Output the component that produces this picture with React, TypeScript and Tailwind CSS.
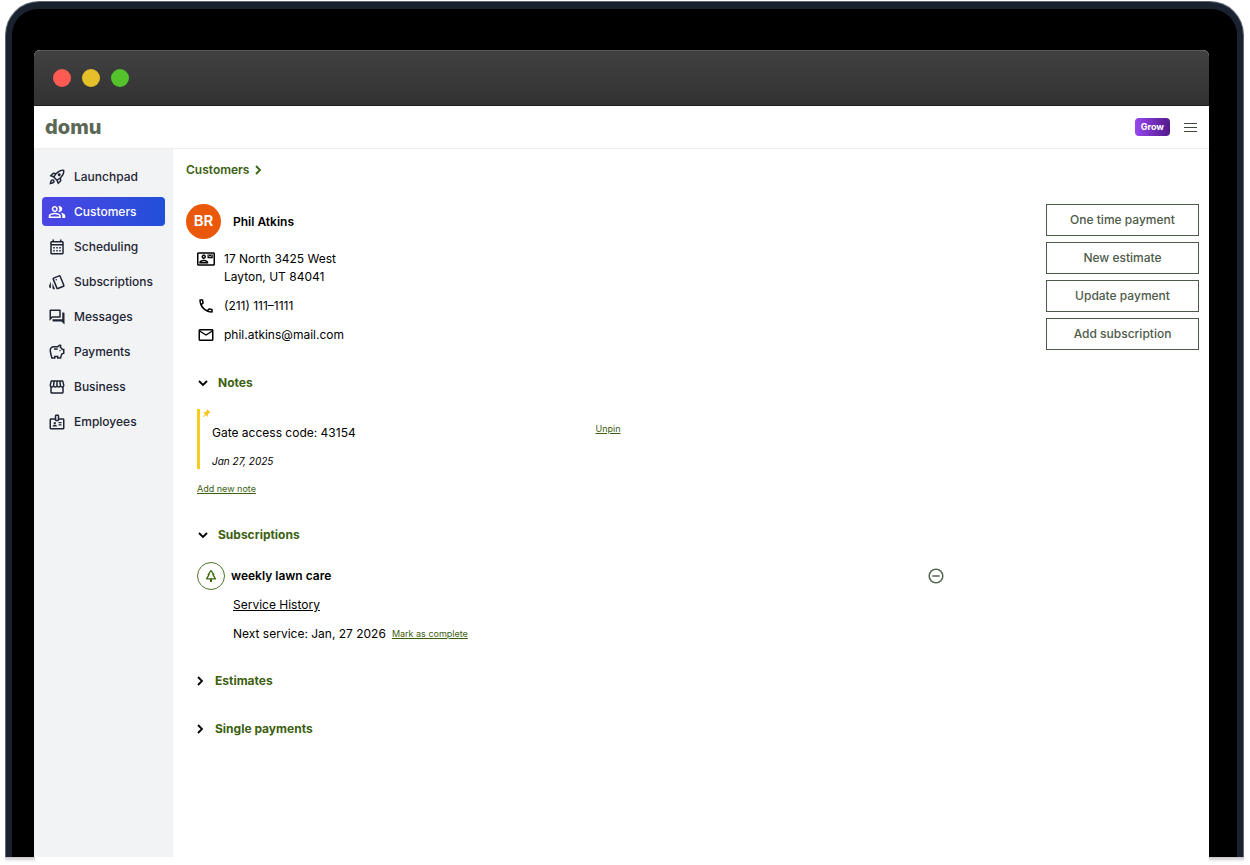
import type { ReactNode } from "react";
import type { IconType } from "react-icons";
import {
  MdOutlineRocketLaunch,
  MdOutlinePeopleAlt,
  MdOutlineCalendarMonth,
  MdOutlineStyle,
  MdOutlineQuestionAnswer,
  MdOutlineSavings,
  MdOutlineStorefront,
  MdOutlineBadge,
  MdOutlineContactMail,
  MdOutlinePhone,
  MdOutlineMail,
  MdPushPin,
  MdRemoveCircleOutline,
} from "react-icons/md";

const navItems: { label: string; icon: IconType; active?: boolean }[] = [
  { label: "Launchpad", icon: MdOutlineRocketLaunch },
  { label: "Customers", icon: MdOutlinePeopleAlt, active: true },
  { label: "Scheduling", icon: MdOutlineCalendarMonth },
  { label: "Subscriptions", icon: MdOutlineStyle },
  { label: "Messages", icon: MdOutlineQuestionAnswer },
  { label: "Payments", icon: MdOutlineSavings },
  { label: "Business", icon: MdOutlineStorefront },
  { label: "Employees", icon: MdOutlineBadge },
];

const actions = ["One time payment", "New estimate", "Update payment", "Add subscription"];

function Chevron({ open = false }: { open?: boolean }) {
  return (
    <svg viewBox="0 0 12 12" className="size-3 shrink-0" fill="none" stroke="currentColor" strokeWidth="1.8" aria-hidden="true">
      <path d={open ? "M2 4l4 4 4-4" : "M4 2l4 4-4 4"} />
    </svg>
  );
}

function TreeIcon() {
  return (
    <svg viewBox="0 0 14 14" className="size-3.5" fill="none" stroke="currentColor" strokeWidth="1.3" strokeLinejoin="round" aria-hidden="true">
      <path d="M7 1.5L4.200 5.600h.9L2.500 9.800h9L8.900 5.600h.9L7 1.500z" />
      <path d="M7 9.800v3.200" strokeWidth="2" />
    </svg>
  );
}

function SectionHeading({ open, children }: { open?: boolean; children: ReactNode }) {
  return (
    <h2 className="leading-5 font-bold text-[#3b6010]">
      <button type="button" aria-expanded={!!open} className={open ? "flex items-center gap-[9px]" : "flex items-center gap-[9px] -ml-[3px]"}>
        <span className="flex text-black">
          <Chevron open={open} />
        </span>
        {children}
      </button>
    </h2>
  );
}

function Sidebar() {
  return (
    <nav aria-label="Main" className="w-[139px] shrink-0 border-r border-[#eceef0] bg-[#f1f3f5] pt-[13px] pr-[7px] pl-2">
      <ul className="flex flex-col gap-1.5">
        {navItems.map(({ label, icon: Icon, active }) => (
          <li key={label}>
            <a
              href="#"
              aria-current={active ? "page" : undefined}
              className={
                active
                  ? "flex h-[29px] items-center gap-2 rounded bg-linear-to-r from-[#4b45e4] to-[#1f4fd9] pl-1.5 font-medium text-white"
                  : "flex h-[29px] items-center gap-2 rounded pl-1.5 font-medium text-[#1e2433]"
              }
            >
              <Icon className="size-[18px] shrink-0" />
              {label}
            </a>
          </li>
        ))}
      </ul>
    </nav>
  );
}

function Details() {
  return (
    <div className="min-w-0 flex-1">
      <div className="flex items-center gap-3">
        <span className="flex size-[35px] items-center justify-center rounded-full bg-[#ea580c] text-[15px] font-semibold text-white">BR</span>
        <h1 className="font-semibold">Phil Atkins</h1>
      </div>
      <div className="mt-[11px] flex flex-col gap-[11px] pl-[11px] leading-[18px]">
        <div className="flex gap-[9px]">
          <MdOutlineContactMail className="size-[18px] shrink-0" />
          <address className="not-italic">
            17 North 3425 West
            <br />
            Layton, UT 84041
          </address>
        </div>
        <div className="flex items-center gap-[9px]">
          <MdOutlinePhone className="size-[18px]" />
          (211) 111–1111
        </div>
        <div className="flex items-center gap-[9px]">
          <MdOutlineMail className="size-[18px]" />
          phil.atkins@mail.com
        </div>
      </div>

      <section className="mt-[29px] pl-[11px]">
        <SectionHeading open>Notes</SectionHeading>
        <div className="mt-4 grid grid-cols-2">
          <div className="relative border-l-3 border-[#f5cd1e] pt-[15px] pl-3 leading-[18px]">
            <MdPushPin className="absolute top-0 left-px size-[10px] rotate-45 text-[#f5c51e]" />
            <p>Gate access code: 43154</p>
            <p className="mt-[11px] text-[10px] leading-4 italic">Jan 27, 2025</p>
          </div>
          <div className="pt-3">
            <button type="button" className="block text-[9px] leading-4 text-[#3b6010] underline">Unpin</button>
          </div>
        </div>
        <button type="button" className="mt-3 block text-[9px] leading-4 text-[#3b6010] underline">Add new note</button>
      </section>

      <section className="mt-7 pl-[11px]">
        <SectionHeading open>Subscriptions</SectionHeading>
        <div className="mt-[17px] flex items-center gap-1.5 pr-[49px]">
          <span className="flex size-7 items-center justify-center rounded-full border border-[#4f7327] text-[#3b6b10]">
            <TreeIcon />
          </span>
          <h3 className="font-semibold">weekly lawn care</h3>
          <button type="button" aria-label="Remove subscription" className="ml-auto text-[#566553]">
            <MdRemoveCircleOutline className="size-[18px]" />
          </button>
        </div>
        <div className="pl-9 leading-[18px]">
          <a href="#" className="mt-1.5 block w-fit underline">Service History</a>
          <p className="mt-[11px] flex items-center gap-1.5">
            Next service: Jan, 27 2026
            <button type="button" className="text-[9px] leading-4 text-[#3b6010] underline">Mark as complete</button>
          </p>
        </div>
      </section>

      <section className="mt-7 pl-[11px]">
        <SectionHeading>Estimates</SectionHeading>
      </section>
      <section className="mt-7 pl-[11px]">
        <SectionHeading>Single payments</SectionHeading>
      </section>
    </div>
  );
}

export default function App() {
  return (
    <div className="flex min-h-screen flex-col bg-white pt-px pr-1.5 pb-[3px] pl-[5px] font-['Inter',sans-serif] text-[12px]">
      <div className="flex flex-1 flex-col rounded-t-[34px] bg-[#5f6876] px-px pt-px">
        <div className="flex flex-1 flex-col rounded-t-[33px] bg-[#1a2230] px-1.5 pt-[7px]">
          <div className="flex flex-1 flex-col rounded-t-[26px] bg-black pt-[41px] pr-7 pl-[22px]">
            <div className="flex flex-1 flex-col overflow-hidden rounded-t-md bg-white text-black">
              <div className="flex h-14 items-center gap-[11px] border-t border-b border-t-[#5a5a5a] border-b-[#1c1c1c] bg-linear-to-b from-[#414141] to-[#323232] pl-[19px]">
                <span className="size-[18px] rounded-full bg-[#ff5b52]" />
                <span className="size-[18px] rounded-full bg-[#e6c029]" />
                <span className="size-[18px] rounded-full bg-[#53c22b]" />
              </div>
              <header className="flex h-[43px] items-center justify-between border-b border-[#eceef0] pr-3 pl-[11px]">
                <a href="#" className="text-[20px] leading-none font-extrabold text-[#5c6856]">domu</a>
                <div className="flex items-center gap-3.5">
                  <span className="flex h-[18px] items-center rounded bg-linear-to-r from-[#9747ef] to-[#531a8c] px-1.5 text-[9px] font-bold text-white">Grow</span>
                  <button type="button" aria-label="Menu" className="flex w-[13px] flex-col gap-[3px]">
                    <span className="h-px bg-[#3f4a3b]" />
                    <span className="h-px bg-[#3f4a3b]" />
                    <span className="h-px bg-[#3f4a3b]" />
                  </button>
                </div>
              </header>
              <div className="flex flex-1">
                <Sidebar />
                <main className="min-w-0 flex-1 pt-[11px] pr-2.5 pl-[13px]">
                  <nav aria-label="Breadcrumb">
                    <a href="#" className="flex w-fit items-center gap-[3px] leading-5 font-semibold text-[#3b6010]">
                      Customers
                      <Chevron />
                    </a>
                  </nav>
                  <div className="mt-6 flex gap-[52px]">
                    <Details />
                    <div className="flex w-[153px] shrink-0 flex-col gap-1.5">
                      {actions.map((label) => (
                        <button key={label} type="button" className="h-8 border border-[#4d5a49] font-medium text-[#4d5a49]">
                          {label}
                        </button>
                      ))}
                    </div>
                  </div>
                </main>
              </div>
            </div>
          </div>
        </div>
      </div>
      <div className="flex h-[5px] justify-between" aria-hidden="true">
        <span className="w-[30px] bg-linear-to-b from-[#c9c4c8] to-white" />
        <span className="w-[35px] bg-linear-to-b from-[#c9c4c8] to-white" />
      </div>
    </div>
  );
}
